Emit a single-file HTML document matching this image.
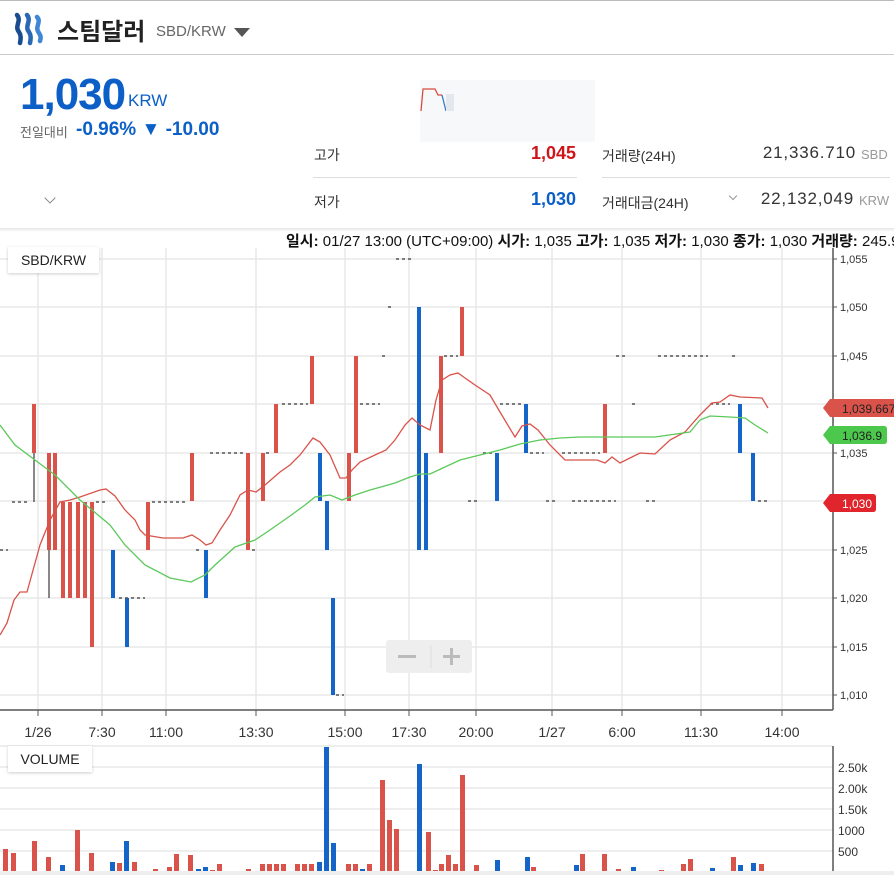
<!DOCTYPE html>
<html><head><meta charset="utf-8"><style>
*{margin:0;padding:0;box-sizing:border-box}
body{width:894px;height:875px;overflow:hidden;background:#fff;font-family:"Liberation Sans","Noto Sans CJK KR",sans-serif;position:relative;color:#333}
.a{position:absolute;white-space:nowrap}
</style></head><body>
<div class="a" style="left:0;top:0;width:894px;height:1px;background:#bbb"></div>
<svg class="a" style="left:12px;top:12px" width="34" height="34" viewBox="0 0 34 34">
<path d="M5 3 C10 9,2 14,7 20 C9 23,9 26,8 31" stroke="#1a4d8f" stroke-width="4.5" fill="none" stroke-linecap="round"/>
<path d="M15 3 C20 9,12 14,17 20 C19 23,19 26,18 31" stroke="#2a67b5" stroke-width="4.5" fill="none" stroke-linecap="round"/>
<path d="M25 5 C30 10,22 15,27 21 C29 24,29 26,28 29" stroke="#3f86d6" stroke-width="4.5" fill="none" stroke-linecap="round"/>
</svg>
<div class="a" style="left:57px;top:12px;font-size:24px;font-weight:bold;color:#222">스팀달러</div>
<div class="a" style="left:156px;top:23px;font-size:15px;color:#666">SBD/KRW</div>
<div class="a" style="left:234px;top:28px;width:0;height:0;border-left:8px solid transparent;border-right:8px solid transparent;border-top:9px solid #555"></div>
<div class="a" style="left:0;top:54px;width:894px;height:1px;background:#ccc"></div>
<div class="a" style="left:20px;top:70px;font-size:44px;font-weight:bold;color:#0b5fc6;letter-spacing:-1px">1,030</div>
<div class="a" style="left:128px;top:91px;font-size:17px;color:#0b5fc6">KRW</div>
<div class="a" style="left:20px;top:122px;font-size:13px;color:#666">전일대비</div>
<div class="a" style="left:76px;top:119px;font-size:19px;font-weight:bold;color:#0b5fc6">-0.96% ▼ -10.00</div>
<div class="a" style="left:46px;top:194px;width:8px;height:8px;border-right:1px solid #888;border-bottom:1px solid #888;transform:rotate(45deg)"></div>
<div class="a" style="left:420px;top:80px;width:175px;height:62px;background:#f6f8fa"></div>
<svg class="a" style="left:420px;top:80px" width="40" height="35"><path d="M1 31 L3 9 L15 9 L18 15 L22 15" stroke="#d64b3f" fill="none" stroke-width="1.3"/><path d="M22 15 L26 31" stroke="#3a78c9" fill="none" stroke-width="1.3"/><rect x="26" y="14" width="8" height="17" fill="#e3e8ee"/></svg>
<div class="a" style="left:314px;top:145px;font-size:14px;color:#333">고가</div>
<div class="a" style="left:496px;top:143px;width:80px;text-align:right;font-size:18px;font-weight:bold;color:#d0141b">1,045</div>
<div class="a" style="left:313px;top:177px;width:264px;height:1px;background:#ddd"></div>
<div class="a" style="left:314px;top:192px;font-size:14px;color:#333">저가</div>
<div class="a" style="left:496px;top:189px;width:80px;text-align:right;font-size:18px;font-weight:bold;color:#0b5fc6">1,030</div>
<div class="a" style="left:602px;top:146px;font-size:14px;color:#333">거래량(24H)</div>
<div class="a" style="left:700px;top:143px;width:156px;text-align:right;font-size:17px;color:#333;letter-spacing:0.8px">21,336.710</div>
<div class="a" style="left:861px;top:147px;font-size:13px;color:#999">SBD</div>
<div class="a" style="left:602px;top:177px;width:288px;height:1px;background:#ddd"></div>
<div class="a" style="left:602px;top:193px;font-size:14px;color:#333">거래대금(24H)</div>
<div class="a" style="left:730px;top:193px;width:6px;height:6px;border-right:1px solid #999;border-bottom:1px solid #999;transform:rotate(45deg)"></div>
<div class="a" style="left:700px;top:189px;width:154px;text-align:right;font-size:17px;color:#333;letter-spacing:0.8px">22,132,049</div>
<div class="a" style="left:859px;top:193px;font-size:13px;color:#999">KRW</div>
<div class="a" style="left:0;top:228px;width:894px;height:4px;background:linear-gradient(#e6e6e6,#fff)"></div>
<div class="a" style="left:286px;top:230px;font-size:15px;color:#111"><b>일시:</b> 01/27 13:00 (UTC+09:00) <b>시가:</b> 1,035 <b>고가:</b> 1,035 <b>저가:</b> 1,030 <b>종가:</b> 1,030 <b>거래량:</b> 245.94</div>
<svg class="a" style="left:0;top:0" width="894" height="875">
<g stroke="#e8e8e8" stroke-width="1.5">
<line x1="38" y1="248" x2="38" y2="710"/><line x1="102" y1="248" x2="102" y2="710"/><line x1="166" y1="248" x2="166" y2="710"/><line x1="256" y1="248" x2="256" y2="710"/><line x1="345" y1="248" x2="345" y2="710"/><line x1="409" y1="248" x2="409" y2="710"/><line x1="476" y1="248" x2="476" y2="710"/><line x1="552" y1="248" x2="552" y2="710"/><line x1="622" y1="248" x2="622" y2="710"/><line x1="701" y1="248" x2="701" y2="710"/><line x1="782" y1="248" x2="782" y2="710"/>
<line x1="0" y1="259" x2="833" y2="259"/><line x1="0" y1="307" x2="833" y2="307"/><line x1="0" y1="356" x2="833" y2="356"/><line x1="0" y1="404" x2="833" y2="404"/><line x1="0" y1="453" x2="833" y2="453"/><line x1="0" y1="501" x2="833" y2="501"/><line x1="0" y1="550" x2="833" y2="550"/><line x1="0" y1="598" x2="833" y2="598"/><line x1="0" y1="647" x2="833" y2="647"/><line x1="0" y1="695" x2="833" y2="695"/>
<line x1="0" y1="767" x2="833" y2="767"/><line x1="0" y1="788" x2="833" y2="788"/><line x1="0" y1="809" x2="833" y2="809"/><line x1="0" y1="830" x2="833" y2="830"/><line x1="0" y1="851" x2="833" y2="851"/>
</g>
<line x1="833" y1="248" x2="833" y2="710" stroke="#555" stroke-width="1.5"/>
<line x1="0" y1="710" x2="833" y2="710" stroke="#555" stroke-width="1.5"/>
<line x1="0" y1="746" x2="833" y2="746" stroke="#ddd"/>
<line x1="833" y1="746" x2="833" y2="875" stroke="#555" stroke-width="1.5"/>
<g fill="#333" font-size="11" font-family="Liberation Sans">
<text x="840" y="263">1,055</text><text x="840" y="311">1,050</text><text x="840" y="360">1,045</text><text x="840" y="457">1,035</text><text x="840" y="554">1,025</text><text x="840" y="602">1,020</text><text x="840" y="651">1,015</text><text x="840" y="699">1,010</text>
<text x="838" y="772" font-size="12">2.50k</text><text x="838" y="793" font-size="12">2.00k</text><text x="838" y="814" font-size="12">1.50k</text><text x="838" y="835" font-size="12">1000</text><text x="838" y="856" font-size="12">500</text>
</g>
<g stroke="#555"><line x1="833" y1="259" x2="837" y2="259"/><line x1="833" y1="307" x2="837" y2="307"/><line x1="833" y1="356" x2="837" y2="356"/><line x1="833" y1="453" x2="837" y2="453"/><line x1="833" y1="550" x2="837" y2="550"/><line x1="833" y1="598" x2="837" y2="598"/><line x1="833" y1="647" x2="837" y2="647"/><line x1="833" y1="695" x2="837" y2="695"/>
<line x1="38" y1="710" x2="38" y2="716"/><line x1="102" y1="710" x2="102" y2="716"/><line x1="166" y1="710" x2="166" y2="716"/><line x1="256" y1="710" x2="256" y2="716"/><line x1="345" y1="710" x2="345" y2="716"/><line x1="409" y1="710" x2="409" y2="716"/><line x1="476" y1="710" x2="476" y2="716"/><line x1="552" y1="710" x2="552" y2="716"/><line x1="622" y1="710" x2="622" y2="716"/><line x1="701" y1="710" x2="701" y2="716"/><line x1="782" y1="710" x2="782" y2="716"/></g>
<g fill="#333" font-size="14" font-family="Liberation Sans" text-anchor="middle">
<text x="38" y="737">1/26</text><text x="102" y="737">7:30</text><text x="166" y="737">11:00</text><text x="256" y="737">13:30</text><text x="345" y="737">15:00</text><text x="409" y="737">17:30</text><text x="476" y="737">20:00</text><text x="552" y="737">1/27</text><text x="622" y="737">6:00</text><text x="701" y="737">11:30</text><text x="782" y="737">14:00</text>
</g>
<g stroke="#111" stroke-width="1"><line x1="34" y1="404" x2="34" y2="502"/><line x1="49" y1="453" x2="49" y2="598"/></g>
<g fill="#d9534a">
<rect x="32" y="404" width="4" height="49"/><rect x="47" y="453" width="4" height="97"/><rect x="53" y="453" width="4" height="97"/>
<rect x="61" y="502" width="4" height="96"/><rect x="68" y="502" width="4" height="96"/><rect x="76" y="502" width="4" height="96"/><rect x="83" y="502" width="4" height="96"/><rect x="90" y="502" width="4" height="145"/>
<rect x="146" y="502" width="4" height="48"/><rect x="190" y="453" width="4" height="48"/><rect x="246" y="453" width="4" height="97"/><rect x="261" y="453" width="4" height="48"/><rect x="274" y="404" width="4" height="49"/><rect x="310" y="356" width="4" height="48"/><rect x="347" y="453" width="4" height="48"/><rect x="354" y="356" width="4" height="97"/><rect x="439" y="356" width="4" height="97"/><rect x="460" y="307" width="4" height="49"/><rect x="603" y="404" width="4" height="49"/>
</g>
<g fill="#1565c8">
<rect x="111" y="550" width="4" height="48"/><rect x="125" y="598" width="4" height="49"/><rect x="204" y="550" width="4" height="48"/><rect x="318" y="453" width="4" height="48"/><rect x="325" y="501" width="4" height="49"/><rect x="331" y="598" width="4" height="97"/><rect x="417" y="307" width="4" height="243"/><rect x="424" y="453" width="4" height="97"/><rect x="495" y="453" width="4" height="48"/><rect x="524" y="404" width="4" height="49"/><rect x="738" y="404" width="4" height="49"/><rect x="751" y="453" width="4" height="48"/>
</g>
<g stroke="#555" stroke-width="1.5" stroke-dasharray="3 3">
<line x1="12" y1="502" x2="30" y2="502"/><line x1="0" y1="550" x2="8" y2="550"/><line x1="96" y1="502" x2="108" y2="502"/><line x1="119" y1="598" x2="145" y2="598"/><line x1="152" y1="502" x2="186" y2="502"/><line x1="196" y1="550" x2="202" y2="550"/><line x1="210" y1="453" x2="244" y2="453"/><line x1="252" y1="550" x2="258" y2="550"/><line x1="266" y1="453" x2="272" y2="453"/><line x1="282" y1="404" x2="308" y2="404"/><line x1="336" y1="695" x2="344" y2="695"/><line x1="360" y1="404" x2="380" y2="404"/><line x1="382" y1="356" x2="386" y2="356"/><line x1="388" y1="307" x2="394" y2="307"/><line x1="396" y1="259" x2="414" y2="259"/><line x1="444" y1="356" x2="458" y2="356"/><line x1="468" y1="501" x2="480" y2="501"/><line x1="483" y1="453" x2="493" y2="453"/><line x1="500" y1="404" x2="522" y2="404"/><line x1="530" y1="453" x2="544" y2="453"/><line x1="546" y1="501" x2="556" y2="501"/><line x1="562" y1="453" x2="600" y2="453"/><line x1="572" y1="501" x2="616" y2="501"/><line x1="616" y1="356" x2="628" y2="356"/><line x1="632" y1="404" x2="636" y2="404"/><line x1="646" y1="501" x2="656" y2="501"/><line x1="658" y1="356" x2="708" y2="356"/><line x1="710" y1="404" x2="730" y2="404"/><line x1="732" y1="356" x2="736" y2="356"/><line x1="758" y1="501" x2="770" y2="501"/>
</g>
<polyline fill="none" stroke="#d9534a" stroke-width="1.3" points="0,635 7,623 14,600 20,592 27,592 40,545 50,520 60,502 70,500 80,497 100,490 106,489 115,496 125,510 135,520 140,530 145,535 163,538 183,538 192,535 200,540 206,545 212,543 220,530 230,515 240,495 248,490 256,492 265,485 280,472 290,465 300,455 313,438 320,442 330,455 340,478 346,478 352,470 360,462 375,455 386,450 395,440 405,425 412,418 420,425 430,430 436,400 442,380 450,375 458,373 465,378 475,385 490,395 500,412 515,437 522,426 530,424 538,430 550,445 565,460 580,460 597,460 605,463 612,457 620,463 630,458 640,453 655,454 670,440 685,432 700,415 712,403 720,402 730,395 740,397 762,398 768,408"/>
<polyline fill="none" stroke="#5bc95b" stroke-width="1.3" points="0,425 15,445 35,460 55,475 80,500 110,525 125,545 145,565 170,578 191,582 205,575 215,565 235,547 255,540 270,530 290,516 305,505 315,497 330,495 342,500 355,495 370,490 395,483 410,477 420,474 430,474 445,467 460,460 480,455 500,450 520,444 540,440 560,438 580,437 600,437 620,437 640,437 655,437 690,432 700,420 710,416 730,417 745,418 755,425 768,433"/>
<path d="M823 408 L830 399 L894 399 L894 417 L830 417Z" fill="#d9534a"/>
<text x="842" y="413" font-size="12" fill="#222" font-family="Liberation Sans">1,039.667</text>
<path d="M823 435 L830 426 L884 426 Q887 426 887 429 L887 441 Q887 444 884 444 L830 444Z" fill="#4cc94c"/>
<text x="842" y="440" font-size="12" fill="#222" font-family="Liberation Sans">1,036.9</text>
<path d="M823 503 L830 494 L873 494 Q876 494 876 497 L876 509 Q876 512 873 512 L830 512Z" fill="#e0262c"/>
<text x="842" y="508" font-size="12" fill="#fff" font-family="Liberation Sans">1,030</text>
<rect x="386" y="640" width="86" height="33" rx="3" fill="#eee"/>
<rect x="398" y="655" width="18" height="3" fill="#bbb"/><line x1="431" y1="645" x2="431" y2="668" stroke="#ddd"/>
<rect x="443" y="655" width="17" height="3" fill="#bbb"/><rect x="450" y="648" width="3" height="17" fill="#bbb"/>
<g fill="#d9534a">
<rect x="3" y="849" width="5" height="26"/><rect x="11" y="853" width="5" height="22"/><rect x="32" y="841" width="5" height="34"/><rect x="46" y="857" width="5" height="18"/><rect x="75" y="830" width="5" height="45"/><rect x="89" y="853" width="5" height="22"/><rect x="117" y="863" width="5" height="12"/><rect x="132" y="862" width="5" height="13"/><rect x="153" y="869" width="5" height="6"/><rect x="167" y="867" width="5" height="8"/><rect x="174" y="854" width="5" height="21"/><rect x="188" y="855" width="5" height="20"/><rect x="210" y="870" width="5" height="5"/><rect x="217" y="864" width="5" height="11"/><rect x="233" y="871" width="5" height="4"/><rect x="246" y="869" width="5" height="6"/><rect x="260" y="864" width="5" height="11"/><rect x="267" y="864" width="5" height="11"/><rect x="274" y="864" width="5" height="11"/><rect x="281" y="864" width="5" height="11"/><rect x="295" y="864" width="5" height="11"/><rect x="302" y="864" width="5" height="11"/><rect x="309" y="864" width="5" height="11"/><rect x="346" y="864" width="5" height="11"/><rect x="353" y="864" width="5" height="11"/><rect x="367" y="864" width="5" height="11"/><rect x="380" y="780" width="5" height="95"/><rect x="387" y="820" width="5" height="55"/><rect x="394" y="829" width="5" height="46"/><rect x="426" y="832" width="5" height="43"/><rect x="433" y="870" width="5" height="5"/><rect x="439" y="864" width="5" height="11"/><rect x="446" y="855" width="5" height="20"/><rect x="453" y="864" width="5" height="11"/><rect x="460" y="775" width="5" height="100"/><rect x="474" y="865" width="5" height="10"/><rect x="531" y="867" width="5" height="8"/><rect x="580" y="854" width="5" height="21"/><rect x="602" y="854" width="5" height="21"/><rect x="616" y="869" width="5" height="6"/><rect x="659" y="870" width="5" height="5"/><rect x="681" y="864" width="5" height="11"/><rect x="688" y="859" width="5" height="16"/><rect x="731" y="857" width="5" height="18"/><rect x="759" y="864" width="5" height="11"/>
</g>
<g fill="#1565c8">
<rect x="60" y="865" width="5" height="10"/><rect x="110" y="862" width="5" height="13"/><rect x="124" y="841" width="5" height="34"/><rect x="196" y="869" width="5" height="6"/><rect x="203" y="867" width="5" height="8"/><rect x="317" y="862" width="5" height="13"/><rect x="324" y="747" width="5" height="128"/><rect x="331" y="843" width="5" height="32"/><rect x="360" y="869" width="5" height="6"/><rect x="417" y="764" width="5" height="111"/><rect x="495" y="860" width="5" height="15"/><rect x="525" y="857" width="5" height="18"/><rect x="574" y="865" width="5" height="10"/><rect x="631" y="867" width="5" height="8"/><rect x="710" y="868" width="5" height="7"/><rect x="738" y="865" width="5" height="10"/><rect x="751" y="863" width="5" height="12"/>
</g>
</svg>
<div class="a" style="left:8px;top:247px;width:91px;height:26px;background:#fff;box-shadow:0 1px 3px rgba(0,0,0,.2);font-size:14px;color:#222;text-align:center;line-height:26px">SBD/KRW</div>
<div class="a" style="left:8px;top:746px;width:84px;height:26px;background:#fff;box-shadow:0 1px 3px rgba(0,0,0,.2);font-size:14px;color:#222;text-align:center;line-height:26px">VOLUME</div>
<div class="a" style="left:0;top:871px;width:894px;height:4px;background:#eee"></div>
</body></html>
